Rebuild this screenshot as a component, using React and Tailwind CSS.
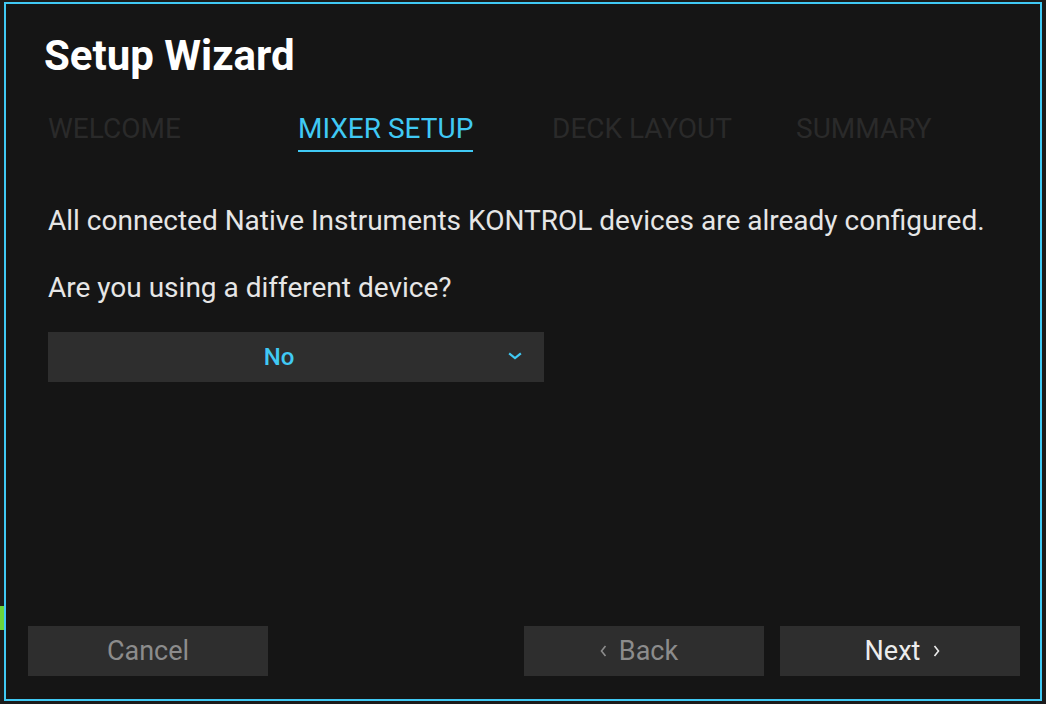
function Chevron({ dir, color }) {
  return (
    <svg width="7" height="12" viewBox="0 0 7 12" fill="none">
      <path
        d={dir === "left" ? "M5.5 1 L1.5 6 L5.5 11" : "M1.5 1 L5.5 6 L1.5 11"}
        stroke={color}
        strokeWidth="1.6"
      />
    </svg>
  );
}

export default function App() {
  const tabs = [
    { label: "WELCOME", active: false, w: "w-[250px]" },
    { label: "MIXER SETUP", active: true, w: "w-[254px]" },
    { label: "DECK LAYOUT", active: false, w: "w-[244px]" },
    { label: "SUMMARY", active: false, w: "w-[200px]" },
  ];
  return (
    <div
      className="relative w-[1046px] h-[704px] bg-[#1b1b1b] pt-[2px] pl-[4px] overflow-hidden"
      style={{ fontFamily: "Roboto, 'Noto Sans', sans-serif" }}
    >
      <div className="absolute left-0 top-[606px] w-[4px] h-[24px] bg-[#6ad63a]" />
      <div className="w-[1038px] h-[699px] border-2 border-[#40c9f4] bg-[#151515] flex flex-col">
        <div className="mt-[31px] pl-[38px] h-[42px] leading-[42px] text-[42px] font-bold text-white">
          Setup Wizard
        </div>
        <div className="mt-[38px] pl-[42px] flex">
          {tabs.map((t) => (
            <div key={t.label} className={t.w + " shrink-0"}>
              <span
                className={
                  t.active
                    ? "inline-block text-[28px] leading-[28px] pb-[7px] border-b-2 border-[#40c9f4] text-[#40c9f4]"
                    : "inline-block text-[28px] leading-[28px] pb-[7px] border-b-2 border-transparent text-[#2a2a2a]"
                }
              >
                {t.label}
              </span>
            </div>
          ))}
        </div>
        <div className="mt-[55px] pl-[42px] h-[28px] text-[28px] leading-[28px] text-[#e6e6e6] whitespace-nowrap">
          All connected Native Instruments KONTROL devices are already configured.
        </div>
        <div className="mt-[39px] pl-[42px] h-[28px] text-[28px] leading-[28px] text-[#e6e6e6]">
          Are you using a different device?
        </div>
        <div className="mt-[30px] ml-[42px] w-[496px] h-[50px] bg-[#2e2e2e] flex items-center pr-[34px] relative">
          <span className="w-full text-center text-[24px] font-medium text-[#40c9f4] leading-none">No</span>
          <svg
            className="absolute right-[22px] top-[20px]"
            width="14"
            height="8"
            viewBox="0 0 14 8"
            fill="none"
          >
            <path d="M2 2 L7 6 L12 2" stroke="#40c9f4" strokeWidth="2.2" strokeLinecap="square" />
          </svg>
        </div>
        <div className="flex-1" />
        <div className="pb-[23px] pl-[22px] flex items-center">
          <button className="w-[240px] h-[50px] bg-[#2e2e2e] text-[27px] text-[#8c8c8c]">Cancel</button>
          <div className="flex-1" />
          <button className="w-[240px] h-[50px] bg-[#2e2e2e] text-[27px] text-[#8c8c8c] flex items-center justify-center gap-[12px] pr-[10px]">
            <Chevron dir="left" color="#8c8c8c" />
            <span>Back</span>
          </button>
          <button className="ml-[16px] mr-[20px] w-[240px] h-[50px] bg-[#2e2e2e] text-[27px] text-[#ececec] flex items-center justify-center gap-[13px] pl-[5px]">
            <span>Next</span>
            <Chevron dir="right" color="#ececec" />
          </button>
        </div>
      </div>
    </div>
  );
}
